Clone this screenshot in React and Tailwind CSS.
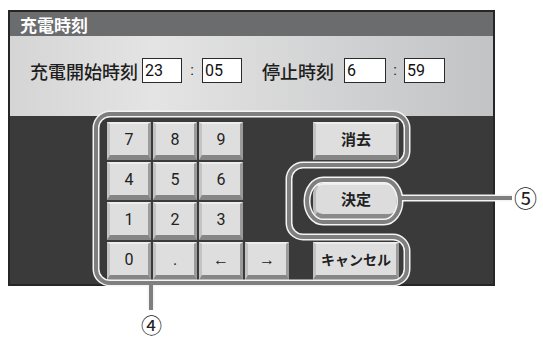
import React from 'react';

// 空文字は空きマス
const KEYS = ['7', '8', '9', '', '4', '5', '6', '', '1', '2', '3', '', '0', '.', '←', '→'];

const jp = "font-['Noto_Sans_CJK_JP','Noto_Sans',sans-serif]";
const num = "font-['Roboto','Liberation_Sans',sans-serif]";

// キー面：上下左右で色を変えて立体感を出す
const bevel =
  'bg-[#dedede] border-t-2 border-t-[#ededed] border-l-[3px] border-l-[#c3c3c3] border-r-[3px] border-r-[#9b9b9b] border-b-[5px] border-b-[#868686]';

function Key({ label }) {
  if (!label) return <div />;
  return (
    <div className={`w-[44px] h-[38px] flex items-center justify-center text-[16px] text-[#222] ${num} ${bevel}`}>
      {label}
    </div>
  );
}

function TimeBox({ value, w = 'w-[40px]' }) {
  return (
    <div className={`${w} h-[25px] bg-white border border-[#2b2b2b] pl-[2px] flex items-center text-[16px] text-[#111] ${num}`}>
      {value}
    </div>
  );
}

function Colon({ w = 'w-[20px]' }) {
  return <span className={`${w} text-center text-[15px] text-[#222] ${num}`}>:</span>;
}

function Callouts() {
  const outline =
    'M108 114 H393 A14 14 0 0 1 407 128 V151 A14 14 0 0 1 393 165 H303 A14 14 0 0 0 289 179 V223 A14 14 0 0 0 303 237 H393 A14 14 0 0 1 407 251 V269 A14 14 0 0 1 393 283 H110 A14 14 0 0 1 96 269 V128 A14 14 0 0 1 110 114 Z';
  const decide = 'M323 180 H384 A16 21 0 0 1 400 201 A16 21 0 0 1 384 222 H323 A16 21 0 0 1 307 201 A16 21 0 0 1 323 180 Z';
  const paths = [outline, decide, 'M401 198 H512', 'M151 285 V310'];
  return (
    <svg className="absolute inset-0 pointer-events-none" width="543" height="338" viewBox="0 0 543 338">
      <g fill="none" stroke="#f4f4f4" strokeWidth="7">
        {paths.map((d) => <path key={d} d={d} />)}
      </g>
      <g fill="none" stroke="#7f7f7f" strokeWidth="4">
        {paths.map((d) => <path key={d} d={d} />)}
      </g>
    </svg>
  );
}

export default function App() {
  return (
    <div className="relative w-[543px] h-[338px] bg-white pt-[10px] pl-[8px]">
      <div className="w-[487px] border-2 border-[#262626] flex flex-col">
        <div className={`h-[24px] bg-[#6b6c6e] pl-[10px] flex items-center text-white text-[17px] font-bold leading-none ${jp}`}>
          充電時刻
        </div>

        <div className="h-[80px] pt-[22px] pl-[20px] flex items-start bg-linear-to-r from-[#d5d5d5] via-[#e4e4e4] via-[30%] to-[#c2c3c5]">
          <div className="flex items-center h-[25px]">
            <span className={`w-[108px] text-[18px] font-medium text-[#1e1e1e] leading-none ${jp}`}>充電開始時刻</span>
            <div className="ml-[4px]">
              <TimeBox value="23" />
            </div>
            <Colon />
            <TimeBox value="05" />
            <span className={`ml-[20px] w-[72px] text-[18px] font-medium text-[#1e1e1e] leading-none ${jp}`}>停止時刻</span>
            <div className="ml-[10px]">
              <TimeBox value="6" w="w-[42px]" />
            </div>
            <Colon w="w-[18px]" />
            <TimeBox value="59" w="w-[41px]" />
          </div>
        </div>

        <div className="h-[168px] bg-[#393a39] pl-[97px] pt-[6px] flex items-start">
          <div className="grid grid-cols-[44px_44px_44px_44px] gap-[2px]">
            {KEYS.map((k, i) => <Key key={i} label={k} />)}
          </div>

          <div className="ml-[24px] w-[86px] h-[158px] flex flex-col justify-between">
            <div className={`h-[38px] flex items-center justify-center text-[15px] font-bold text-[#222] ${jp} ${bevel}`}>
              消去
            </div>
            <div className={`h-[36px] rounded-[10px] bg-[#dcdcdc] border-t-2 border-t-[#ededed] border-l-[3px] border-l-[#bdbdbd] border-r-[3px] border-r-[#9a9a9a] border-b-[5px] border-b-[#8a8a8a] flex items-center justify-center text-[15px] font-bold text-[#222] ${jp}`}>
              決定
            </div>
            <div className={`h-[38px] flex items-center justify-center text-[14px] font-bold text-[#222] ${jp} ${bevel}`}>
              キャンセル
            </div>
          </div>
        </div>
      </div>

      <Callouts />
      <span className={`absolute left-[141px] top-[312px] text-[21px] leading-[24px] text-[#222] ${jp}`}>④</span>
      <span className={`absolute left-[514px] top-[186px] text-[23px] leading-[23px] text-[#222] ${jp}`}>⑤</span>
    </div>
  );
}
